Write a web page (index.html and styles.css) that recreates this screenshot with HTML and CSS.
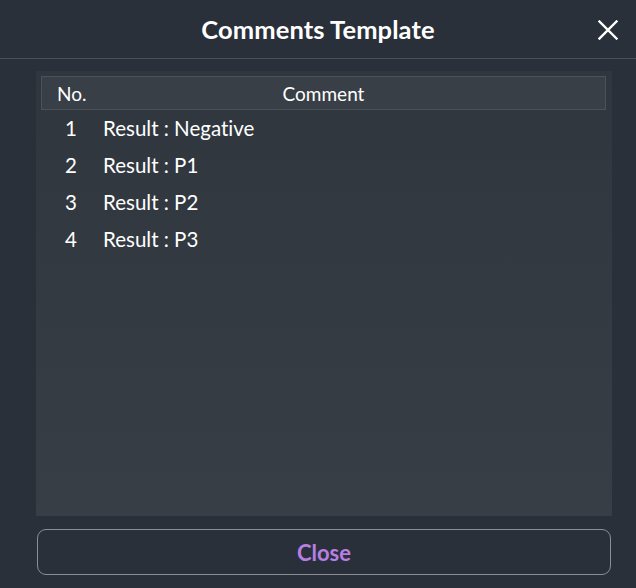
FILE: index.html
```html
<!DOCTYPE html>
<html>
<head>
<meta charset="utf-8">
<link rel="stylesheet" href="styles.css">
</head>
<body>
<div class="dialog">
  <div class="header">
    <h1 class="title">Comments Template</h1>
    <button class="close-x" aria-label="Close">
      <svg width="20" height="20" viewBox="0 0 20 20"><path d="M1.5 1.5 L18.5 18.5 M18.5 1.5 L1.5 18.5" stroke="#ffffff" stroke-width="2.4" stroke-linecap="square" fill="none"/></svg>
    </button>
  </div>
  <div class="body">
    <div class="panel">
      <div class="thead">
        <div class="col-no">No.</div>
        <div class="col-comment">Comment</div>
      </div>
      <div class="rows">
        <div class="row"><div class="num">1</div><div class="text">Result : Negative</div></div>
        <div class="row"><div class="num">2</div><div class="text">Result : P1</div></div>
        <div class="row"><div class="num">3</div><div class="text">Result : P2</div></div>
        <div class="row"><div class="num">4</div><div class="text">Result : P3</div></div>
      </div>
    </div>
    <button class="close-btn">Close</button>
  </div>
</div>
</body>
</html>
```
FILE: styles.css
```css
html, body {
  margin: 0;
  padding: 0;
}
body {
  width: 636px;
  height: 588px;
  background: #2a3039;
  font-family: "Lato", "Noto Sans", sans-serif;
  font-variant-ligatures: none;
  color: #ffffff;
  overflow: hidden;
}
.dialog {
  display: flex;
  flex-direction: column;
  height: 588px;
}
.header {
  height: 58px;
  border-bottom: 1px solid #4a5058;
  display: flex;
  align-items: center;
  justify-content: center;
  position: relative;
}
.title {
  margin: 0 0 1px 0;
  font-size: 25.5px;
  font-weight: 700;
  letter-spacing: 0.1px;
}
.close-x {
  position: absolute;
  right: 18px;
  top: 20px;
  width: 20px;
  height: 20px;
  padding: 0;
  border: 0;
  background: none;
  display: flex;
}
.body {
  padding: 12px 25px 13px 36px;
  display: flex;
  flex-direction: column;
  flex: 1;
}
.panel {
  width: 576px;
  height: 445px;
  box-sizing: border-box;
  padding: 5px 6px 5px 5px;
  background: linear-gradient(#30363e, #383e45);
}
.thead {
  height: 34px;
  box-sizing: border-box;
  border: 1px solid #4c525a;
  background: #393f47;
  display: flex;
  align-items: center;
  font-size: 19px;
}
.col-no {
  width: 60px;
  padding-left: 15px;
  box-sizing: border-box;
}
.col-comment {
  flex: 1;
  text-align: center;
  padding-right: 60px;
}
.rows {
  margin-top: -1px;
}
.row {
  height: 37px;
  display: flex;
  align-items: center;
  font-size: 20.5px;
}
.num {
  width: 60px;
  text-align: center;
}
.text {
  padding-left: 2px;
}
.close-btn {
  margin-top: 13px;
  margin-left: 1px;
  width: 574px;
  height: 46px;
  box-sizing: border-box;
  border: 1px solid #8a8f96;
  border-radius: 9px;
  background: transparent;
  color: #b77fe3;
  font-family: "Lato", "Noto Sans", sans-serif;
  font-size: 22px;
  font-weight: 700;
}
```
